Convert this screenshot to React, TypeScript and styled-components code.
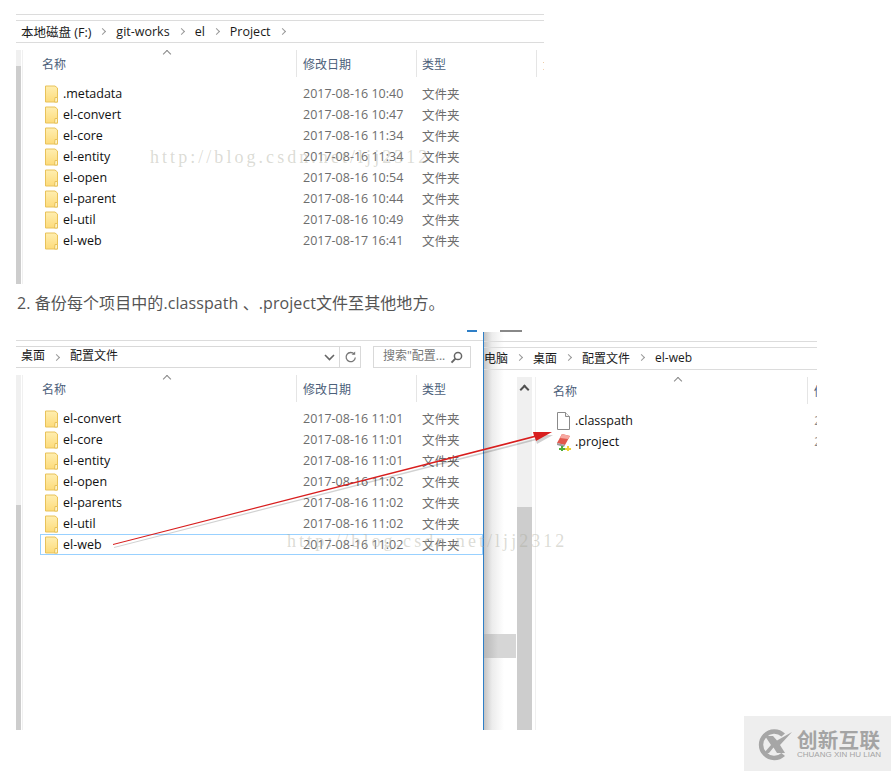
import React from "react";
import styled, { createGlobalStyle } from "styled-components";

const GlobalStyle = createGlobalStyle`
  html, body {
    margin: 0;
    padding: 0;
    background: #fff;
  }
  body {
    font-family: "Open Sans", "Noto Sans CJK SC", sans-serif;
  }
`;

const Page = styled.div`
  position: relative;
  width: 891px;
  height: 771px;
  padding: 14px 0 0 16px;
  box-sizing: border-box;
  overflow: hidden;
`;

const Shot = styled.div`
  position: relative;
  width: 528px;
  height: 270px;
  display: flex;
  flex-direction: column;
`;

const TopRule = styled.div`
  height: 1px;
  background: #dcdcdc;
  margin-bottom: 5px;
`;

const Crumbs = styled.div`
  height: 20px;
  padding-bottom: 1px;
  display: flex;
  align-items: center;
  border-top: 1px solid #dcdcdc;
  border-bottom: 1px solid #dcdcdc;
  font-size: 12.5px;
  color: #1a1a1a;
  white-space: nowrap;
`;

const FirstCrumbs = styled(Crumbs)`
  padding-left: 5px;
  gap: 9px;
`;

const Chevron = styled.span`
  width: 4px;
  height: 4px;
  border-top: 1.5px solid #999;
  border-right: 1.5px solid #999;
  transform: rotate(45deg);
  margin-right: 2px;
`;

const Body = styled.div`
  flex: 1;
  display: flex;
  margin-top: 7px;
  min-height: 0;
`;

const SideBar = styled.div<{ $split: number }>`
  width: 5px;
  background: linear-gradient(#f0f0f0 0 ${(p) => p.$split}px, #cdcdcd ${(p) => p.$split}px);
  border-right: 1px solid #fff;
`;

const GutterLine = styled.div`
  width: 1px;
  background: #f0f0f0;
`;

const Pane = styled.div`
  flex: 1;
  min-width: 0;
`;

const HeadRow = styled.div`
  height: 27px;
  display: flex;
  font-size: 12px;
  color: #4c607a;
  position: relative;
  overflow: hidden;
  white-space: nowrap;
`;

const HeadCell = styled.div<{ $w: number; $pad: number }>`
  width: ${(p) => p.$w}px;
  padding-left: ${(p) => p.$pad}px;
  box-sizing: border-box;
  display: flex;
  align-items: center;
  border-right: 1px solid #e5e5e5;
  flex-shrink: 0;
`;

const SortCaret = styled.span<{ $x: number }>`
  position: absolute;
  left: ${(p) => p.$x}px;
  top: 1px;
  width: 5px;
  height: 5px;
  border-top: 1px solid #888;
  border-left: 1px solid #888;
  transform: rotate(45deg);
`;

const Rows = styled.div`
  margin-top: 6px;
`;

const FileRow = styled.div<{ $selected?: boolean }>`
  height: 21px;
  box-sizing: border-box;
  display: flex;
  align-items: center;
  margin-left: 17px;
  padding-left: 5px;
  font-size: 12.5px;
  white-space: nowrap;
  outline: ${(p) => (p.$selected ? "1px solid #99d1ff" : "none")};
  outline-offset: -1px;
`;

const FileName = styled.span`
  margin-left: 5px;
  width: 240px;
  color: #111;
`;

const FileDate = styled.span`
  width: 119px;
  color: #6d6d6d;
`;

const FileType = styled.span`
  color: #6d6d6d;
`;

const Caption = styled.p`
  margin: 10px 0 0 1px;
  height: 19px;
  line-height: 19px;
  font-size: 16px;
  letter-spacing: 0.08px;
  color: #555;
  white-space: nowrap;
`;

const Desk = styled.div`
  position: relative;
  width: 801px;
  height: 398px;
  margin-top: 19px;
  display: flex;
`;

const LeftWindow = styled.div`
  width: 468px;
  box-sizing: border-box;
  border-right: 1px solid #2f7fc7;
  display: flex;
  flex-direction: column;
  flex-shrink: 0;
`;

const RightWindow = styled.div`
  flex: 1;
  min-width: 0;
  display: flex;
  flex-direction: column;
`;

const AddressBar = styled.div`
  margin-top: 8px;
  border-top: 1px solid #dcdcdc;
  padding-top: 5px;
  display: flex;
  gap: 12px;
  height: 22px;
  font-size: 12px;
  color: #1a1a1a;
`;

const AddressField = styled.div`
  width: 345px;
  box-sizing: border-box;
  height: 22px;
  border: 1px solid #d9d9d9;
  border-left: none;
  display: flex;
  align-items: center;
  padding: 0 0 0 5px;
  gap: 9px;
  line-height: 18px;
`;

const ComboTail = styled.div`
  margin-left: auto;
  display: flex;
  align-items: center;
  height: 100%;
`;

const ComboButton = styled.div<{ $divider?: boolean }>`
  width: 20px;
  height: 100%;
  display: flex;
  align-items: center;
  justify-content: center;
  border-left: ${(p) => (p.$divider ? "1px solid #d9d9d9" : "none")};
`;

const SearchField = styled.div`
  width: 98px;
  box-sizing: border-box;
  height: 22px;
  border: 1px solid #d9d9d9;
  display: flex;
  align-items: center;
  justify-content: space-between;
  padding: 0 7px 0 9px;
  color: #777;
  white-space: nowrap;
  line-height: 18px;
`;

const FieldText = styled.span`
  margin-top: -2px;
`;

const Backdrop = styled.div`
  flex: 1;
  display: flex;
  flex-direction: column;
  min-height: 0;
  background: linear-gradient(90deg, #c4c4c4 0, #ececec 8px, #fff 20px);
`;

const BackdropRule = styled.div`
  height: 1px;
  margin-top: 9px;
  background: #dcdcdc;
`;

const RightCrumbs = styled.div`
  margin-top: 5px;
  height: 23px;
  padding-bottom: 2px;
  border-top: 1px solid #dcdcdc;
  border-bottom: 1px solid #dcdcdc;
  box-sizing: border-box;
  display: flex;
  align-items: center;
  gap: 9px;
  font-size: 12px;
  color: #1a1a1a;
  white-space: nowrap;
`;

const RightBody = styled.div`
  flex: 1;
  display: flex;
  min-height: 0;
  padding-top: 7px;
`;

const HiddenNav = styled.div`
  width: 33px;
  position: relative;
`;

const NavThumb = styled.div`
  position: absolute;
  left: 0;
  right: 1px;
  top: 257px;
  height: 24px;
  background: linear-gradient(90deg, #b8b8b8 0, #d6d6d6 14px);
`;

const VScroll = styled.div`
  width: 15px;
  background: linear-gradient(#f0f0f0 0 130px, #cdcdcd 130px);
  display: flex;
  justify-content: center;
  padding-top: 6px;
  box-sizing: border-box;
`;

const UpArrow = styled.span`
  width: 5px;
  height: 5px;
  margin-top: 3px;
  border-top: 2px solid #505050;
  border-left: 2px solid #505050;
  transform: rotate(45deg);
`;

const RightPane = styled.div`
  flex: 1;
  min-width: 0;
  border-left: 1px solid #f0f0f0;
  margin-left: 3px;
  overflow: hidden;
`;

const RightRows = styled.div`
  margin-top: 6px;
`;

const RightRow = styled.div`
  height: 21px;
  display: flex;
  align-items: center;
  padding-left: 20px;
  gap: 4px;
  font-size: 12.5px;
  color: #111;
`;

const RowEdge = styled.span`
  margin-left: auto;
  margin-right: -4px;
  color: #888;
  font-size: 12px;
`;

const OverflowGlyphs = styled.div`
  position: absolute;
  top: -3px;
  left: 451px;
  height: 3px;
  display: flex;
  gap: 23px;
`;

const GlyphBit = styled.span<{ $w: number; $c: string }>`
  width: ${(p) => p.$w}px;
  height: 2px;
  background: ${(p) => p.$c};
  align-self: flex-end;
`;

const Watermark = styled.div<{ $x: number; $y: number }>`
  position: absolute;
  left: ${(p) => p.$x}px;
  top: ${(p) => p.$y}px;
  font-family: "Liberation Serif", serif;
  font-size: 18px;
  letter-spacing: 3.05px;
  color: rgba(170, 170, 155, 0.42);
  white-space: nowrap;
  pointer-events: none;
`;

const ArrowLayer = styled.svg`
  position: absolute;
  left: 0;
  top: 0;
  pointer-events: none;
  overflow: visible;
`;

const Badge = styled.div`
  position: absolute;
  right: 0;
  bottom: 0;
  width: 147px;
  height: 55px;
  background: #eeeeee;
  display: flex;
  align-items: center;
  padding-left: 12px;
  box-sizing: border-box;
  gap: 3px;
`;

const BadgeText = styled.div`
  display: flex;
  flex-direction: column;
  color: #a4a4a4;
`;

const BadgeTitle = styled.span`
  font-family: "Noto Sans CJK SC", sans-serif;
  font-weight: 700;
  font-size: 20.5px;
  line-height: 23px;
  letter-spacing: 0.3px;
`;

const BadgeSub = styled.span`
  font-family: "Liberation Sans", sans-serif;
  font-size: 8px;
  line-height: 8px;
  white-space: nowrap;
`;

const FolderIcon = () => (
  <svg width="13" height="18" viewBox="0 0 13 18">
    <defs>
      <linearGradient id="fold" x1="0" y1="0" x2="0" y2="1">
        <stop offset="0" stopColor="#ffeeb0" />
        <stop offset="1" stopColor="#fddb7a" />
      </linearGradient>
    </defs>
    <path d="M.5 1h9.500l2.500 2v14H.5z" fill="url(#fold)" stroke="#e8c25a" />
    <path d="M10 12.500h2.500v4.500h-3z" fill="#fff3c4" stroke="#e8c25a" />
  </svg>
);

const PageIcon = () => (
  <svg width="15" height="18" viewBox="0 0 15 18">
    <path d="M1.500.5h8l4 4v13h-12z" fill="#fff" stroke="#8a8a8a" />
    <path d="M9.500.5v4h4" fill="#f2f2f2" stroke="#8a8a8a" />
  </svg>
);

const ProjectIcon = () => (
  <svg width="15" height="18" viewBox="0 0 15 18">
    <path d="M6 1l8 2-5 9-8-2z" fill="#e2574c" />
    <path d="M6 1l8 2-2 3-8-1z" fill="#f6a8a0" />
    <path d="M1 10l8 2-1 2-7-2z" fill="#9a9a9a" />
    <path d="M5 13h2v2h2v2H7v1H5v-1H3v-2h2z" fill="#4fae3b" />
    <path d="M11 13h2v2h2v2h-2v1h-2v-1H9v-2h2z" fill="#eed23a" />
  </svg>
);

const SearchIcon = () => (
  <svg width="13" height="13" viewBox="0 0 13 13">
    <circle cx="8" cy="5" r="3.600" fill="none" stroke="#666" strokeWidth="1.500" />
    <path d="M5.400 7.600L1.500 11.600" stroke="#666" strokeWidth="2" />
  </svg>
);

const RefreshIcon = () => (
  <svg width="13" height="13" viewBox="0 0 13 13">
    <path d="M10.300 3.200a4.600 4.600 0 1 0 1 3.300" fill="none" stroke="#777" strokeWidth="1.300" />
    <path d="M7.600 3.800h3.600V.4z" fill="#777" />
  </svg>
);

const ChevronDown = () => (
  <svg width="11" height="7" viewBox="0 0 11 7">
    <path d="M1 1l4.500 4.500L10 1" fill="none" stroke="#666" strokeWidth="1.600" />
  </svg>
);

const LogoMark = () => (
  <svg width="38" height="36" viewBox="0 0 38 36">
    <path d="M29 7.500A15.500 15.500 0 1 0 29 30l-3.500-3a11 11 0 1 1 0-16.500z" fill="#a6a6a6" />
    <path d="M9 10h8l4 4.500L36 6 24 19l5 8h-8l-3.500-5.500L13 27H8l7-8z" fill="#a6a6a6" />
  </svg>
);

const firstRows: [string, string][] = [
  [".metadata", "2017-08-16 10:40"],
  ["el-convert", "2017-08-16 10:47"],
  ["el-core", "2017-08-16 11:34"],
  ["el-entity", "2017-08-16 11:34"],
  ["el-open", "2017-08-16 10:54"],
  ["el-parent", "2017-08-16 10:44"],
  ["el-util", "2017-08-16 10:49"],
  ["el-web", "2017-08-17 16:41"],
];

const secondRows: [string, string][] = [
  ["el-convert", "2017-08-16 11:01"],
  ["el-core", "2017-08-16 11:01"],
  ["el-entity", "2017-08-16 11:01"],
  ["el-open", "2017-08-16 11:02"],
  ["el-parents", "2017-08-16 11:02"],
  ["el-util", "2017-08-16 11:02"],
  ["el-web", "2017-08-16 11:02"],
];

const ListHead = () => (
  <HeadRow>
    <SortCaret $x={141} />
    <HeadCell $w={274} $pad={19}>名称</HeadCell>
    <HeadCell $w={120} $pad={6}>修改日期</HeadCell>
    <HeadCell $w={120} $pad={5}>类型</HeadCell>
    <HeadCell $w={40} $pad={6}>大小</HeadCell>
  </HeadRow>
);

export default function App() {
  return (
    <Page>
      <GlobalStyle />
      <Shot>
        <TopRule />
        <FirstCrumbs>
          本地磁盘 (F:) <Chevron /> git-works <Chevron /> el <Chevron /> Project <Chevron />
        </FirstCrumbs>
        <Body>
          <SideBar $split={16} />
          <GutterLine />
          <Pane>
            <ListHead />
            <Rows>
              {firstRows.map(([name, date]) => (
                <FileRow key={name}>
                  <FolderIcon />
                  <FileName>{name}</FileName>
                  <FileDate>{date}</FileDate>
                  <FileType>文件夹</FileType>
                </FileRow>
              ))}
            </Rows>
          </Pane>
        </Body>
        <Watermark $x={134} $y={133}>http://blog.csdn.net/ljj2312</Watermark>
      </Shot>

      <Caption>2. 备份每个项目中的.classpath 、.project文件至其他地方。</Caption>

      <Desk>
        <OverflowGlyphs>
          <GlyphBit $w={10} $c="#2f7fc7" />
          <GlyphBit $w={22} $c="#888" />
        </OverflowGlyphs>
        <LeftWindow>
          <AddressBar>
            <AddressField>
              <FieldText>桌面</FieldText> <Chevron /> <FieldText>配置文件</FieldText>
              <ComboTail>
                <ComboButton><ChevronDown /></ComboButton>
                <ComboButton $divider><RefreshIcon /></ComboButton>
              </ComboTail>
            </AddressField>
            <SearchField>
              <FieldText>搜索"配置...</FieldText> <SearchIcon />
            </SearchField>
          </AddressBar>
          <Body>
            <SideBar $split={130} />
            <GutterLine />
            <Pane>
              <ListHead />
              <Rows>
                {secondRows.map(([name, date]) => (
                  <FileRow key={name} $selected={name === "el-web"}>
                    <FolderIcon />
                    <FileName>{name}</FileName>
                    <FileDate>{date}</FileDate>
                    <FileType>文件夹</FileType>
                  </FileRow>
                ))}
              </Rows>
            </Pane>
          </Body>
        </LeftWindow>
        <RightWindow>
          <Backdrop>
            <BackdropRule />
            <RightCrumbs>
              电脑 <Chevron /> 桌面 <Chevron /> 配置文件 <Chevron /> el-web
            </RightCrumbs>
            <RightBody>
              <HiddenNav>
                <NavThumb />
              </HiddenNav>
              <VScroll>
                <UpArrow />
              </VScroll>
              <RightPane>
                <HeadRow>
                  <SortCaret $x={139} />
                  <HeadCell $w={272} $pad={17}>名称</HeadCell>
                  <HeadCell $w={30} $pad={6}>修改</HeadCell>
                </HeadRow>
                <RightRows>
                  <RightRow><PageIcon />.classpath<RowEdge>2</RowEdge></RightRow>
                  <RightRow><ProjectIcon />.project<RowEdge>2</RowEdge></RightRow>
                </RightRows>
              </RightPane>
            </RightBody>
          </Backdrop>
        </RightWindow>
        <Watermark $x={271} $y={199}>http://blog.csdn.net/ljj2312</Watermark>
        <ArrowLayer width="801" height="398">
          <path d="M97 212L518 103.800 517 100 536 100 520 109 518.800 105.300 97 213z" fill="#000" opacity="0.18" transform="translate(1 3)" />
          <path d="M97 212L518 103.800 517 100 536 100 520 109 518.800 105.300 97 213z" fill="#d81e1e" />
        </ArrowLayer>
      </Desk>

      <Badge>
        <LogoMark />
        <BadgeText>
          <BadgeTitle>创新互联</BadgeTitle>
          <BadgeSub>CHUANG XIN HU LIAN</BadgeSub>
        </BadgeText>
      </Badge>
    </Page>
  );
}
